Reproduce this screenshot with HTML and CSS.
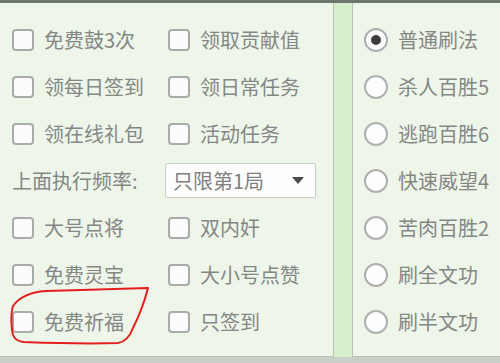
FILE: index.html
```html
<!DOCTYPE html>
<html lang="zh">
<head>
<meta charset="utf-8">
<link rel="stylesheet" href="styles.css">
</head>
<body>
<div class="topline"></div>
<div class="main">
  <div class="panel left">
    <div class="row">
      <label class="item"><span class="cb"></span><span class="txt">免费鼓3次</span></label>
      <label class="item"><span class="cb"></span><span class="txt">领取贡献值</span></label>
    </div>
    <div class="row">
      <label class="item"><span class="cb"></span><span class="txt">领每日签到</span></label>
      <label class="item"><span class="cb"></span><span class="txt">领日常任务</span></label>
    </div>
    <div class="row">
      <label class="item"><span class="cb"></span><span class="txt">领在线礼包</span></label>
      <label class="item"><span class="cb"></span><span class="txt">活动任务</span></label>
    </div>
    <div class="row freq">
      <span class="freq-label">上面执行频率:</span>
      <div class="select"><span class="txt">只限第1局</span><span class="arrow"></span></div>
    </div>
    <div class="row">
      <label class="item"><span class="cb"></span><span class="txt">大号点将</span></label>
      <label class="item"><span class="cb"></span><span class="txt">双内奸</span></label>
    </div>
    <div class="row">
      <label class="item"><span class="cb"></span><span class="txt">免费灵宝</span></label>
      <label class="item"><span class="cb"></span><span class="txt">大小号点赞</span></label>
    </div>
    <div class="row">
      <label class="item"><span class="cb"></span><span class="txt">免费祈福</span></label>
      <label class="item"><span class="cb"></span><span class="txt">只签到</span></label>
    </div>
  </div>
  <div class="strip"></div>
  <div class="panel right">
    <label class="ritem"><span class="rb on"></span><span class="txt">普通刷法</span></label>
    <label class="ritem"><span class="rb"></span><span class="txt">杀人百胜5</span></label>
    <label class="ritem"><span class="rb"></span><span class="txt">逃跑百胜6</span></label>
    <label class="ritem"><span class="rb"></span><span class="txt">快速威望4</span></label>
    <label class="ritem"><span class="rb"></span><span class="txt">苦肉百胜2</span></label>
    <label class="ritem"><span class="rb"></span><span class="txt">刷全文功</span></label>
    <label class="ritem"><span class="rb"></span><span class="txt">刷半文功</span></label>
  </div>
</div>
<svg class="mark" width="500" height="363" viewBox="0 0 500 363">
  <path d="M13 306 C 20 296, 32 292, 46 291 C 80 290, 120 289, 148 288 C 145 300, 138 318, 133 328 C 130 336, 126 342, 118 343 C 90 344, 50 343, 24 342 C 16 341, 13 338, 12 330 C 11 320, 11 312, 13 306 Z" fill="none" stroke="#e41e1e" stroke-width="2" stroke-linejoin="round"/>
</svg>
</body>
</html>
```

FILE: styles.css
```css
html, body {
  margin: 0;
  padding: 0;
}
body {
  width: 500px;
  height: 363px;
  overflow: hidden;
  background: #c8cfc7;
  font-family: "Noto Sans CJK SC", "Noto Sans", sans-serif;
  font-size: 20px;
  color: #858785;
  position: relative;
}
.topline {
  height: 3px;
  background: #6d786c;
}
.main {
  display: flex;
  height: 354px;
}
.panel {
  background: #eef6ea;
  box-sizing: border-box;
  border-bottom: 1px solid #b7c2b3;
  padding-top: 13px;
}
.left {
  width: 334px;
  border-right: 1px solid #b7c2b3;
  padding-left: 12px;
}
.strip {
  width: 18px;
  background: #d7edcb;
}
.right {
  flex: 1;
  border-left: 1px solid #b7c2b3;
  padding-left: 11px;
}
.row {
  display: grid;
  grid-template-columns: 156px 1fr;
  height: 47px;
  align-items: center;
}
.item, .ritem {
  display: flex;
  align-items: center;
  gap: 10px;
}
.ritem {
  height: 47px;
}
.txt {
  line-height: 1;
  white-space: nowrap;
}
.cb {
  width: 22px;
  height: 22px;
  box-sizing: border-box;
  border: 2px solid #a8aba8;
  border-radius: 4px;
  background: #fbfcfb;
  flex: none;
}
.rb {
  width: 24px;
  height: 24px;
  box-sizing: border-box;
  border: 2px solid #adb0ad;
  border-radius: 50%;
  background: #fcfdfc;
  flex: none;
  display: flex;
  align-items: center;
  justify-content: center;
}
.rb.on::after {
  content: "";
  width: 10px;
  height: 10px;
  border-radius: 50%;
  background: #3d3f3d;
}
.freq {
  display: flex;
}
.freq-label {
  width: 153px;
  line-height: 1;
  white-space: nowrap;
}
.select {
  width: 151px;
  height: 35px;
  box-sizing: border-box;
  border: 1px solid #c9ccc9;
  border-radius: 2px;
  background: #fdfdfd;
  display: flex;
  align-items: center;
  justify-content: space-between;
  padding: 0 11px 0 7px;
  color: #808080;
}
.arrow {
  width: 0;
  height: 0;
  border-left: 6px solid transparent;
  border-right: 6px solid transparent;
  border-top: 7px solid #4a4c4a;
}
.mark {
  position: absolute;
  left: 0;
  top: 0;
  pointer-events: none;
}
```
